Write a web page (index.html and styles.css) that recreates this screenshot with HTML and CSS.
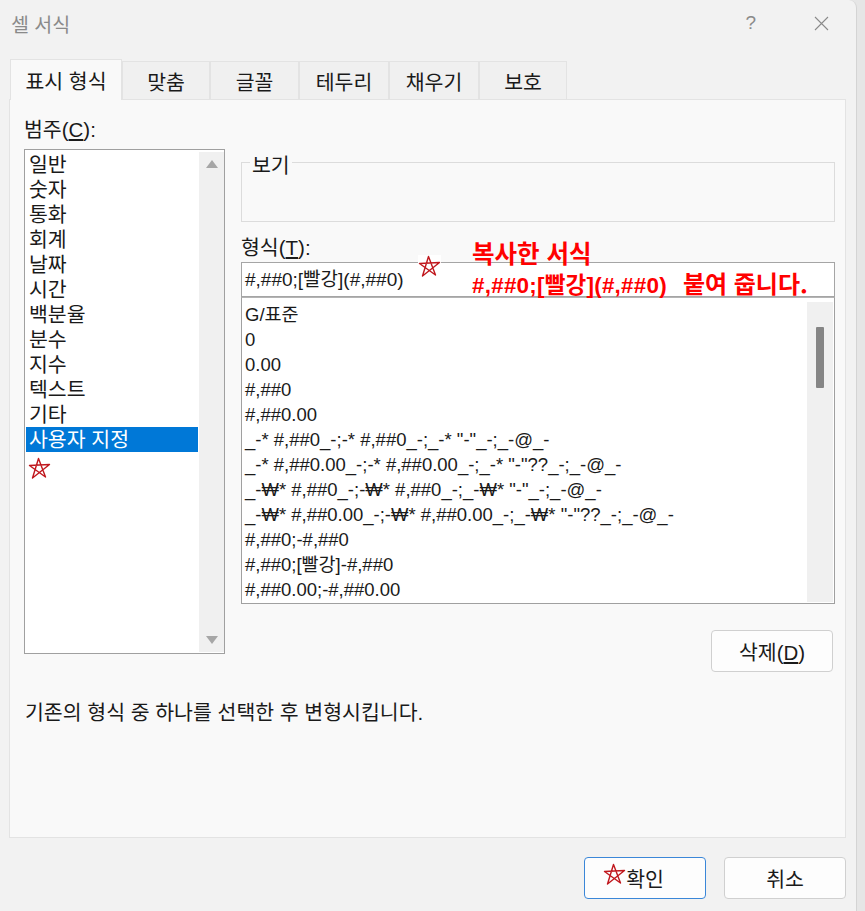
FILE: index.html
```html
<!DOCTYPE html>
<html lang="ko">
<head>
<meta charset="utf-8">
<title>셀 서식</title>
<link rel="stylesheet" href="styles.css">
</head>
<body>
<div class="dialog">
  <div class="titlebar">
    <span class="title">셀 서식</span>
    <span class="help">?</span>
    <svg class="close" width="15" height="15" viewBox="0 0 15 15"><path d="M1 1L14 14M14 1L1 14" stroke="#8a8a8a" stroke-width="1.1" fill="none"/></svg>
  </div>
  <div class="tabs">
    <div class="tab active w1">표시 형식</div>
    <div class="tab w2">맞춤</div>
    <div class="tab w3">글꼴</div>
    <div class="tab w4">테두리</div>
    <div class="tab w4">채우기</div>
    <div class="tab w2">보호</div>
  </div>
  <div class="panel">
    <div class="main">
      <div class="left">
        <div class="label">범주(<u>C</u>):</div>
        <div class="listbox">
          <div class="items">
            <div class="item">일반</div>
            <div class="item">숫자</div>
            <div class="item">통화</div>
            <div class="item">회계</div>
            <div class="item">날짜</div>
            <div class="item">시간</div>
            <div class="item">백분율</div>
            <div class="item">분수</div>
            <div class="item">지수</div>
            <div class="item">텍스트</div>
            <div class="item">기타</div>
            <div class="item selected">사용자 지정</div>
            <div class="star-row">
              <svg class="star" width="23" height="23" viewBox="0 0 23 23"><path d="M10.5 1.5L17.5 20L1.5 8.5L21.5 7.5L4.5 21Z" stroke="#c0171d" stroke-width="1.4" fill="none" stroke-linejoin="round"/></svg>
            </div>
          </div>
          <div class="vscroll"><span class="arrow up"></span><span class="arrow down"></span></div>
        </div>
      </div>
      <div class="right">
        <div class="group"><span class="legend">보기</span></div>
        <div class="label label-fmt">형식(<u>T</u>):</div>
        <div class="inputwrap">
          <div class="input">#,##0;[빨강](#,##0)</div>
          <svg class="star star-input" width="23" height="23" viewBox="0 0 23 23"><path d="M10.5 1.5L17.5 20L1.5 8.5L21.5 7.5L4.5 21Z" stroke="#c0171d" stroke-width="1.4" fill="none" stroke-linejoin="round"/></svg>
          <div class="note">
            <div class="note1">복사한 서식</div>
            <div class="note2"><span class="note-code">#,##0;[빨강](#,##0)</span><span class="note-ko">붙여 줍니다.</span></div>
          </div>
        </div>
        <div class="fmtlist">
          <div class="fmtitems">
            <div class="fitem">G/표준</div>
            <div class="fitem">0</div>
            <div class="fitem">0.00</div>
            <div class="fitem">#,##0</div>
            <div class="fitem">#,##0.00</div>
            <div class="fitem">_-* #,##0_-;-* #,##0_-;_-* "-"_-;_-@_-</div>
            <div class="fitem">_-* #,##0.00_-;-* #,##0.00_-;_-* "-"??_-;_-@_-</div>
            <div class="fitem">_-₩* #,##0_-;-₩* #,##0_-;_-₩* "-"_-;_-@_-</div>
            <div class="fitem">_-₩* #,##0.00_-;-₩* #,##0.00_-;_-₩* "-"??_-;_-@_-</div>
            <div class="fitem">#,##0;-#,##0</div>
            <div class="fitem">#,##0;[빨강]-#,##0</div>
            <div class="fitem">#,##0.00;-#,##0.00</div>
          </div>
          <div class="fscroll"><div class="thumb"></div></div>
        </div>
        <div class="btnrow"><button class="btn">삭제(<u>D</u>)</button></div>
      </div>
    </div>
    <p class="desc">기존의 형식 중 하나를 선택한 후 변형시킵니다.</p>
  </div>
  <div class="footer">
    <button class="btn primary"><svg class="star star-btn" width="23" height="23" viewBox="0 0 23 23"><path d="M10.5 1.5L17.5 20L1.5 8.5L21.5 7.5L4.5 21Z" stroke="#c0171d" stroke-width="1.4" fill="none" stroke-linejoin="round"/></svg>확인</button>
    <button class="btn">취소</button>
  </div>
</div>
</body>
</html>
```
FILE: styles.css
```css
* { box-sizing: border-box; }
html, body { margin: 0; padding: 0; }
body {
  background: #e6e6e6;
  font-family: "Liberation Sans", "Noto Sans CJK KR", sans-serif;
  font-size: 20.5px;
  color: #1a1a1a;
  width: 865px;
  height: 911px;
  overflow: hidden;
}
.dialog {
  width: 857px;
  height: 930px;
  background: #f2f2f2;
  border-right: 1px solid #d4d4d4;
  border-top-right-radius: 8px;
}
.titlebar {
  height: 46px;
  display: flex;
  align-items: center;
  padding-left: 11px;
}
.title {
  flex: 1;
  font-size: 19.5px;
  color: #8a8a8a;
}
.help {
  font-size: 19px;
  color: #8a8a8a;
  margin-right: 58px;
}
.close { margin-right: 27px; }

.tabs {
  margin-top: 13px;
  height: 41px;
  display: flex;
  align-items: flex-end;
  padding-left: 10px;
  margin-bottom: -1px;
  position: relative;
  z-index: 1;
}
.tab {
  height: 38px;
  display: flex;
  align-items: center;
  justify-content: center;
  background: #f0f0f0;
  border: 1px solid #e3e3e3;
  border-bottom: none;
  margin-bottom: 1px;
}
.tab.active {
  height: 41px;
  margin-bottom: 0;
  background: #f9f9f9;
}
.w1 { width: 112px; }
.w2 { width: 88px; }
.w3 { width: 89px; }
.w4 { width: 90px; }

.panel {
  margin: 0 10px 0 9px;
  height: 739px;
  background: #f9f9f9;
  border: 1px solid #e3e3e3;
  padding: 17px 11px 0 14px;
}
.main {
  display: grid;
  grid-template-columns: 201px 594px;
  column-gap: 16px;
  align-items: start;
}
.label { line-height: 25px; height: 25px; }
.left .label { margin-bottom: 7px; }

.listbox {
  height: 505px;
  border: 1px solid #a0a0a0;
  background: #fff;
  display: flex;
  padding: 2px 0 1px 1px;
}
.items { width: 172px; }
.item {
  height: 25px;
  line-height: 25px;
  padding-left: 3px;
  white-space: nowrap;
}
.item.selected { background: #0078d7; color: #fff; }
.star-row { padding: 5px 0 0 2px; height: 30px; }
.vscroll {
  width: 25px;
  margin-left: 1px;
  background: #f0f0f0;
  display: flex;
  flex-direction: column;
  justify-content: space-between;
  align-items: center;
  padding: 8px 0;
}
.arrow { width: 0; height: 0; border-left: 6px solid transparent; border-right: 6px solid transparent; }
.arrow.up { border-bottom: 8px solid #a6a6a6; }
.arrow.down { border-top: 8px solid #a6a6a6; }

.group {
  margin-top: 45px;
  height: 60px;
  border: 1px solid #dcdcdc;
  position: relative;
}
.legend {
  position: absolute;
  left: 8px;
  top: -10px;
  line-height: 25px;
  padding: 0 2px;
  background: #f9f9f9;
}
.label-fmt { margin-top: 13px; }
.inputwrap {
  margin-top: 2px;
  position: relative;
}
.input {
  height: 35px;
  border: 1px solid #a5a5a5;
  background: #fff;
  line-height: 33px;
  padding-left: 3px;
  font-size: 19px;
}
.star-input {
  position: absolute;
  left: 177px;
  top: -7px;
  background: #fff;
}
.note {
  position: absolute;
  left: 231px;
  top: -24px;
  color: #ff0000;
  font-weight: bold;
  white-space: nowrap;
}
.note1 {
  font-family: "Noto Sans CJK KR", sans-serif;
  font-size: 24.5px;
  line-height: 30px;
}
.note2 { font-size: 22.5px; line-height: 30px; }
.note-code { letter-spacing: 0.2px; }
.note-ko {
  font-family: "Noto Sans CJK KR", sans-serif;
  margin-left: 16px;
  font-size: 24px;
}

.fmtlist {
  height: 307px;
  border: 1px solid #a0a0a0;
  border-top-color: #b4b4b4;
  background: #fff;
  display: flex;
  padding: 4px 1px 0 0;
}
.fmtitems { flex: 1; }
.fitem {
  height: 25px;
  line-height: 25px;
  padding-left: 3px;
  white-space: nowrap;
  font-size: 18.5px;
}
.fscroll {
  width: 26px;
  height: 300px;
  background: #f0f0f0;
  padding: 25px 0 0 9px;
}
.thumb {
  width: 8px;
  height: 61px;
  background: #858585;
  border-radius: 1px;
}
.btnrow {
  display: flex;
  justify-content: flex-end;
  margin-top: 26px;
  padding-right: 2px;
}
.btn {
  width: 122px;
  height: 42px;
  border: 1px solid #d0d0d0;
  border-radius: 4px;
  background: #fdfdfd;
  font-family: inherit;
  font-size: 20.5px;
  color: #1a1a1a;
  padding: 0;
}
.desc {
  margin: 28px 0 0 1px;
  line-height: 25px;
}
.footer {
  margin-top: 19px;
  display: flex;
  justify-content: flex-end;
  gap: 18px;
  padding-right: 10px;
}
.btn.primary {
  border-color: #3b87d8;
  position: relative;
}
.star-btn {
  position: absolute;
  left: 18px;
  top: 5px;
}
```
